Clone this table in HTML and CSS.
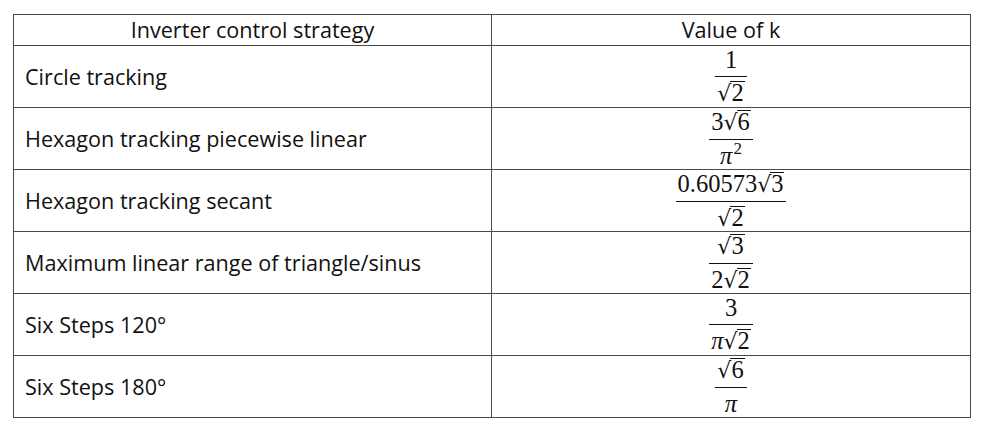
FILE: index.html
```html
<!DOCTYPE html>
<html>
<head>
<meta charset="utf-8">
<link rel="stylesheet" href="styles.css">
</head>
<body>
<table class="ktable">
  <colgroup><col class="c1"><col class="c2"></colgroup>
  <thead>
    <tr><th>Inverter control strategy</th><th>Value of k</th></tr>
  </thead>
  <tbody>
    <tr>
      <td class="name">Circle tracking</td>
      <td class="val"><span class="frac"><span class="num">1</span><span class="den"><span class="sq">√</span><span class="rad">2</span></span></span></td>
    </tr>
    <tr>
      <td class="name">Hexagon tracking piecewise linear</td>
      <td class="val"><span class="frac"><span class="num">3<span class="sq">√</span><span class="rad">6</span></span><span class="den"><i>π</i><sup>2</sup></span></span></td>
    </tr>
    <tr>
      <td class="name">Hexagon tracking secant</td>
      <td class="val"><span class="frac"><span class="num">0.60573<span class="sq">√</span><span class="rad">3</span></span><span class="den"><span class="sq">√</span><span class="rad">2</span></span></span></td>
    </tr>
    <tr>
      <td class="name">Maximum linear range of triangle/sinus</td>
      <td class="val"><span class="frac"><span class="num"><span class="sq">√</span><span class="rad">3</span></span><span class="den">2<span class="sq">√</span><span class="rad">2</span></span></span></td>
    </tr>
    <tr>
      <td class="name">Six Steps 120°</td>
      <td class="val"><span class="frac"><span class="num">3</span><span class="den"><i>π</i><span class="sq">√</span><span class="rad">2</span></span></span></td>
    </tr>
    <tr>
      <td class="name">Six Steps 180°</td>
      <td class="val"><span class="frac"><span class="num"><span class="sq">√</span><span class="rad">6</span></span><span class="den"><i>π</i></span></span></td>
    </tr>
  </tbody>
</table>
</body>
</html>
```
FILE: styles.css
```css
html, body {
  margin: 0;
  padding: 0;
  background: #ffffff;
}
body {
  padding: 14px 0 0 13px;
}
.ktable {
  border-collapse: collapse;
  width: 957px;
  table-layout: fixed;
  font-family: "Open Sans", sans-serif;
  font-size: 21.6px;
  color: #111111;
}
.ktable .c1 { width: 478px; }
.ktable .c2 { width: 479px; }
.ktable th, .ktable td {
  border: 1px solid #4a4a4a;
  padding: 0;
}
.ktable th {
  font-weight: normal;
  height: 30px;
  text-align: center;
  line-height: 30px;
}
.ktable td {
  height: 61px;
}
.name {
  padding-left: 11px !important;
}
.val {
  text-align: center;
}
.frac {
  display: inline-flex;
  flex-direction: column;
  align-items: stretch;
  vertical-align: middle;
  font-family: "Liberation Serif", "DejaVu Serif", serif;
  font-size: 24.5px;
  line-height: 23px;
  color: #111111;
}
.num {
  display: block;
  padding: 0 2px 5px;
  text-align: center;
  white-space: nowrap;
}
.den {
  display: block;
  border-top: 1.5px solid #111111;
  padding: 4px 2px 0;
  text-align: center;
  white-space: nowrap;
}
.sq {
  display: inline-block;
  font-family: "DejaVu Sans", sans-serif;
  font-size: 22px;
  margin-right: -1px;
}
.rad {
  display: inline-block;
  border-top: 1.4px solid #111111;
  line-height: 22px;
  padding: 0 1px;
}
.frac i {
  font-style: italic;
}
.frac sup {
  font-size: 17px;
  line-height: 0;
  vertical-align: 10px;
  margin-left: 1px;
}
```
